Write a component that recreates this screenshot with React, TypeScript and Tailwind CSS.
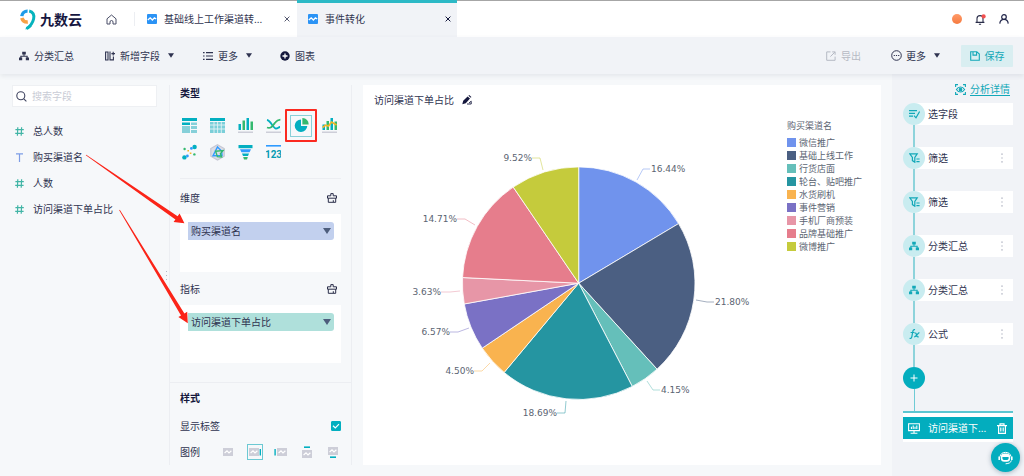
import React, { useState } from "react";

type IconProps = { className?: string };

const GRAY = "#cdced8";
const TEAL = "#03afc0";
const GREEN = "#34b96f";
const BLUE = "#2f9bff";

function LogoMark() {
  return (
    <svg viewBox="0 0 16 21" className="h-[21px] w-4" fill="none" aria-hidden="true">
      <path d="M7.6 2.1A5.6 5.6 0 0 0 1.8 7.2" stroke="#1e9be8" strokeWidth="3.4" />
      <path d="M1.8 9A5.8 5.8 0 0 0 7.8 13" stroke="#f7a145" strokeWidth="3.6" />
      <path d="M9.2 1.9C13 2.6 14.6 6 13.6 10C12.6 14.3 10 17.4 6.6 19.6" stroke="#06b3bd" strokeWidth="3" />
      <path d="M5 20.3L9.8 15.4L11.8 17.6L8.2 20.3Z" fill="#06b3bd" />
    </svg>
  );
}

function HomeIcon() {
  return (
    <svg viewBox="0 0 11 11" className="h-[11px] w-[11px]" fill="none" stroke="#4b4f68" strokeLinejoin="round" aria-hidden="true">
      <path d="M1 4.8L5.5 1L10 4.8V10H7V8A1.5 1.5 0 0 0 4 8V10H1Z" />
    </svg>
  );
}

function TabIcon() {
  return (
    <svg viewBox="0 0 10 10" className="h-[10px] w-[10px] shrink-0" fill="none" aria-hidden="true">
      <rect width="10" height="10" rx="1" fill="#2b93f5" />
      <path d="M.8 6L3.2 3.8L5.4 6L7.4 3.8L9.2 5" stroke="#fff" strokeWidth="1.3" />
    </svg>
  );
}

function CloseIcon() {
  return (
    <svg viewBox="0 0 6 6" className="h-[6px] w-[6px]" stroke="currentColor" aria-hidden="true">
      <path d="M.6 .6L5.4 5.4M5.4 .6L.6 5.4" />
    </svg>
  );
}

function TreeIcon({ className = "h-[10px] w-[10px]" }: IconProps) {
  return (
    <svg viewBox="0 0 10 10" className={className} fill="currentColor" aria-hidden="true">
      <path d="M3.2 .8H6.8V3.6H5.5V4.8H8.7V6.6H10V9.2H6.8V6.6H7.6V5.8H2.4V6.6H3.2V9.2H0V6.6H1.3V4.8H4.5V3.6H3.2Z" />
    </svg>
  );
}

function AddFieldIcon() {
  return (
    <svg viewBox="0 0 10 10" className="h-[10px] w-[10px]" fill="none" stroke="currentColor" strokeWidth="1.1" aria-hidden="true">
      <path d="M.6 1H3V9H.6ZM5 .5V9.5M5 8.9H8.4V5.5M6.4 2.6H10M8.2 .8V4.4" />
    </svg>
  );
}

function ListIcon() {
  return (
    <svg viewBox="0 0 10 10" className="h-[10px] w-[10px]" stroke="currentColor" strokeWidth="1.2" aria-hidden="true">
      <path d="M0 1.6H1.6M3 1.6H10M0 5H1.6M3 5H10M0 8.4H1.6M3 8.4H10" />
    </svg>
  );
}

function PlusDiscIcon() {
  return (
    <svg viewBox="0 0 10 10" className="h-[10px] w-[10px]" aria-hidden="true">
      <circle cx="5" cy="5" r="4.7" fill="#14173c" />
      <path d="M2.5 5H7.5M5 2.5V7.5" stroke="#fff" strokeWidth="1.3" />
    </svg>
  );
}

function Caret({ className = "h-[5px] w-[6px]" }: IconProps) {
  return (
    <svg viewBox="0 0 8 6" className={className} fill="currentColor" aria-hidden="true">
      <path d="M0 0H8L4 6Z" />
    </svg>
  );
}

function ExportIcon() {
  return (
    <svg viewBox="0 0 10 10" className="h-[10px] w-[10px]" fill="none" stroke="currentColor" aria-hidden="true">
      <path d="M4.5 .9H.7V9.3H9.1V5.6M6.2 .9H9.1V3.8M9.1 .9L4.4 5.6" />
    </svg>
  );
}

function MoreCircleIcon() {
  return (
    <svg viewBox="0 0 11 11" className="h-[11px] w-[11px]" fill="none" stroke="currentColor" aria-hidden="true">
      <circle cx="5.5" cy="5.5" r="4.8" />
      <path d="M2.7 5.5H3.9M4.9 5.5H6.1M7.1 5.5H8.3" strokeWidth="1.2" />
    </svg>
  );
}

function SaveIcon() {
  return (
    <svg viewBox="0 0 10 10" className="h-[10px] w-[10px]" fill="none" stroke="currentColor" strokeWidth="1.1" aria-hidden="true">
      <path d="M.7 .7H6.8L9.3 3.1V9.3H.7ZM3 .8V4.1H6.6V.8" />
    </svg>
  );
}

function BellIcon() {
  return (
    <svg viewBox="0 0 11 11" className="h-[11px] w-[11px]" fill="none" aria-hidden="true">
      <path d="M2 8.2V4.6A3 3 0 0 1 8 4.6V8.2M.6 8.4H9.4M3.9 10.2H6.1" stroke="#2a2d49" strokeWidth="1.1" />
      <circle cx="8.6" cy="2.4" r="2.1" fill="#f2504f" />
    </svg>
  );
}

function UserIcon() {
  return (
    <svg viewBox="0 0 10 10" className="h-[10px] w-[10px]" fill="none" stroke="#22264a" strokeWidth="1.2" aria-hidden="true">
      <circle cx="5" cy="3" r="2.3" />
      <path d="M.8 9.6C1 6.8 2.6 5.4 5 5.4S9 6.8 9.2 9.6" />
    </svg>
  );
}

function SearchIcon() {
  return (
    <svg viewBox="0 0 11 11" className="h-[11px] w-[11px] shrink-0" fill="none" stroke="#3f4460" strokeWidth="1.1" aria-hidden="true">
      <circle cx="4.8" cy="4.8" r="4" />
      <path d="M7.8 7.8L10.4 10.4" />
    </svg>
  );
}

function NumberIcon() {
  return (
    <svg viewBox="0 0 9 9" className="h-[9px] w-[9px]" stroke="#42b5a6" strokeWidth="1.2" aria-hidden="true">
      <path d="M2.8 .3L2.4 8.7M6.6 .3L6.2 8.7M.4 2.7H8.8M.2 6.3H8.6" />
    </svg>
  );
}

function TextIcon() {
  return (
    <svg viewBox="0 0 9 9" className="h-[9px] w-[9px]" stroke="#7d9de6" strokeWidth="1.2" aria-hidden="true">
      <path d="M1 .9H8M4.5 .9V9" />
    </svg>
  );
}

function ClearIcon() {
  return (
    <svg viewBox="0 0 10 10" className="h-[10px] w-[10px]" fill="none" stroke="#2a2d49" aria-hidden="true">
      <path d="M.5 5.2V2.8H3.8V.6H6.2V2.8H9.5V5.2ZM1.3 5.2V9.3H8.7V5.2M6.3 7.2V9" />
    </svg>
  );
}

function EditIcon() {
  return (
    <svg viewBox="0 0 10 10" className="h-[10px] w-[10px]" aria-hidden="true">
      <path d="M.3 9.2L1.2 5.8L5.6 1.4L8 3.6L3.8 8.2ZM6.4 .7L7.2 0L9.4 2L8.8 2.8Z" fill="#14173c" />
      <path d="M5 9H9.2V6.2L7 8" fill="none" stroke="#14173c" strokeWidth=".9" />
    </svg>
  );
}

const chartIcons: { name: string; art: React.ReactNode }[] = [
  {
    name: "分组表",
    art: (
      <>
        <path d="M0 1H15V4H0Z" fill={TEAL} />
        <path d="M0 5.5H8V8H0Z" fill={TEAL} />
        <path d="M0 9H8V16H0ZM9 5.5H15V8H9ZM9 9H15V12H9ZM9 13H15V16H9Z" fill="#86d0d9" />
      </>
    ),
  },
  {
    name: "明细表",
    art: (
      <>
        <path d="M0 1H15V4H0Z" fill={TEAL} />
        <path d="M0 5H15V16H0Z" fill="#7bcfd9" />
        <path d="M0 8H15M0 12H15M4 5V16M7.6 5V16M11.3 5V16" stroke="#e3f3f6" strokeWidth=".9" />
      </>
    ),
  },
  {
    name: "柱状图",
    art: (
      <>
        <path d="M.5 7H3V13H.5ZM8.5 1H11V13H8.5Z" fill={TEAL} />
        <path d="M4.5 3.5H7V13H4.5ZM12.5 4.5H15V13H12.5Z" fill={GREEN} />
        <path d="M0 14.5H15V16H0Z" fill={GRAY} />
      </>
    ),
  },
  {
    name: "折线图",
    art: (
      <>
        <path d="M1 3C5 3.6 7 11.5 10 11.5C12 11.5 12.5 10 14 10" fill="none" stroke={TEAL} strokeWidth="1.8" />
        <path d="M1 10.5C5 12 6.5 9 9.5 5.2C11 3 12 2.8 14.4 2.6" fill="none" stroke={GREEN} strokeWidth="1.8" />
        <path d="M0 14.5H15V16H0Z" fill={GRAY} />
      </>
    ),
  },
  {
    name: "饼图",
    art: (
      <>
        <path d="M7 2.4A6.3 6.3 0 1 0 13.3 9H7Z" fill={TEAL} />
        <path d="M8.4 1A6 6 0 0 1 14.6 7.6H8.4Z" fill={GREEN} />
      </>
    ),
  },
  {
    name: "组合图",
    art: (
      <>
        <path d="M.5 7.5H3V13H.5ZM8.5 1H11V13H8.5Z" fill={TEAL} />
        <path d="M4.5 4H7V13H4.5ZM12.5 4.5H15V13H12.5Z" fill={GREEN} />
        <path d="M.6 10.5L3.6 8.2L6.5 9L9.6 5L14.6 8" fill="none" stroke="#f3b626" strokeWidth="1.7" />
        <path d="M0 14.5H15V16H0Z" fill={GRAY} />
      </>
    ),
  },
  {
    name: "散点图",
    art: (
      <>
        <circle cx="12.6" cy="3" r="2.2" fill={TEAL} />
        <circle cx="9.4" cy="4.4" r="1.4" fill={BLUE} />
        <circle cx="2.4" cy="13.4" r="2.2" fill={TEAL} />
        <circle cx="5.4" cy="12" r="1.4" fill={BLUE} />
        <circle cx="2.6" cy="5" r="1.2" fill={GREEN} />
        <circle cx="12.4" cy="10.4" r="1.2" fill={GREEN} />
        <path d="M5.4 6H7V7.6H5.4ZM7.8 8.4H9.4V10H7.8Z" fill="#f3b626" />
      </>
    ),
  },
  {
    name: "雷达图",
    art: (
      <>
        <path d="M7.5 .8L14.2 4.6V12.2L7.5 16L.8 12.2V4.6Z" fill="#dcdde6" stroke="#c6c7d3" strokeWidth="1.2" />
        <path d="M7.5 3L11.6 7L12 11.6L3 11.8Z" fill="none" stroke={BLUE} strokeWidth="1.4" />
        <path d="M5.6 7.2L13 6.6L10.4 9.6L11.6 13L7.4 12.6Z" fill="none" stroke={GREEN} strokeWidth="1.4" />
      </>
    ),
  },
  {
    name: "漏斗图",
    art: (
      <>
        <path d="M.5 1H14.5V4.2H.5Z" fill={TEAL} />
        <path d="M2 5.3H13L11.6 8.3H3.4Z" fill={BLUE} />
        <path d="M4 9.4H11L10 12H5Z" fill={TEAL} />
        <path d="M5.2 13H9.8L9 15.6H6Z" fill={GREEN} />
      </>
    ),
  },
  {
    name: "指标卡",
    art: (
      <>
        <path d="M0 1H15V2.6H0Z" fill={BLUE} />
        <text x="7.5" y="14" textAnchor="middle" fontSize="10" fontWeight="700" fill="#079cb2" fontFamily="'Liberation Sans Narrow', Roboto, sans-serif">
          123
        </text>
      </>
    ),
  },
];

const legendSpots: { name: string; x: number; y: number; mark?: string }[] = [
  { name: "无图例", x: 2, y: 3 },
  { name: "右侧", x: 2, y: 3, mark: "M12.6 5H14V11.4H12.6Z" },
  { name: "左侧", x: 4, y: 3, mark: "M1.4 5H2.8V11.4H1.4Z" },
  { name: "顶部", x: 3, y: 5, mark: "M5 2.4H11V4H5Z" },
  { name: "底部", x: 3, y: 2, mark: "M5 12.4H11V14H5Z" },
];

const fields = [
  { name: "总人数", numeric: true },
  { name: "购买渠道名", numeric: false },
  { name: "人数", numeric: true },
  { name: "访问渠道下单占比", numeric: true },
];

const slices: { name: string; value: number; color: string; swatch: string; line: [number, number][] }[] = [
  { name: "微信推广", value: 16.44, color: "#7093ed", swatch: "bg-[#7093ed]", line: [[637, 180], [643, 169], [650, 169]] },
  { name: "基础上线工作", value: 21.8, color: "#4b5f82", swatch: "bg-[#4b5f82]", line: [[696, 300], [707, 302], [714, 302]] },
  { name: "行货店面", value: 4.15, color: "#65bfba", swatch: "bg-[#65bfba]", line: [[647, 381], [653, 390], [660, 390]] },
  { name: "轮台、贴吧推广", value: 18.69, color: "#2595a1", swatch: "bg-[#2595a1]", line: [[566, 401], [565, 413], [557, 413]] },
  { name: "水货刷机", value: 4.5, color: "#f9b34f", swatch: "bg-[#f9b34f]", line: [[490, 363], [482, 371], [474, 371]] },
  { name: "事件营销", value: 6.57, color: "#7a71c5", swatch: "bg-[#7a71c5]", line: [[469, 328], [458, 332], [450, 332]] },
  { name: "手机厂商预装", value: 3.63, color: "#e796a7", swatch: "bg-[#e796a7]", line: [[460, 291], [450, 292], [441, 292]] },
  { name: "品牌基础推广", value: 14.71, color: "#e67d8c", swatch: "bg-[#e67d8c]", line: [[475, 225], [465, 219], [457, 219]] },
  { name: "微博推广", value: 9.52, color: "#c5cb3c", swatch: "bg-[#c5cb3c]", line: [[543, 170], [540, 158], [532, 158]] },
];

function PieChart() {
  const cx = 578.7;
  const cy = 283.2;
  const r = 116.3;
  const total = slices.reduce((sum, s) => sum + s.value, 0);
  let turned = 0;
  return (
    <svg viewBox="363 109 424 352" className="min-w-0 flex-1 self-start" role="img" aria-label="访问渠道下单占比">
      {slices.map((s) => {
        const a0 = (turned / total) * Math.PI * 2;
        turned += s.value;
        const a1 = (turned / total) * Math.PI * 2;
        const d = `M${cx} ${cy}L${cx + r * Math.sin(a0)} ${cy - r * Math.cos(a0)}A${r} ${r} 0 0 1 ${cx + r * Math.sin(a1)} ${cy - r * Math.cos(a1)}Z`;
        const end = s.line[2];
        const left = end[0] < cx;
        return (
          <g key={s.name}>
            <path d={d} fill={s.color} stroke="#fff" strokeOpacity=".8" strokeWidth="1" strokeLinejoin="round" />
            <polyline points={s.line.map((p) => p.join(",")).join(" ")} fill="none" stroke={s.color} strokeOpacity=".5" />
            <text
              x={left ? end[0] : end[0] + 1}
              y={end[1] + 3}
              textAnchor={left ? "end" : "start"}
              fontSize="9"
              fill="#5b6472"
              fontFamily="'DejaVu Sans', sans-serif"
            >
              {s.value.toFixed(2)}%
            </text>
          </g>
        );
      })}
    </svg>
  );
}

function SelectIcon() {
  return (
    <svg viewBox="0 0 11 10" className="h-[10px] w-[11px]" fill="none" stroke="currentColor" strokeWidth="1.2" aria-hidden="true">
      <path d="M0 1.6H8M0 4.4H6M0 7.2H4M5 6.6L7 8.8L10.6 2.6" />
    </svg>
  );
}

function FilterIcon() {
  return (
    <svg viewBox="0 0 11 10" className="h-[10px] w-[11px]" fill="none" stroke="currentColor" strokeWidth="1.2" aria-hidden="true">
      <path d="M.8 .9H8.2L5.8 4.4V9.2L3.4 7.6V4.4ZM7.4 6H10.6M7.4 8.6H10.6" />
    </svg>
  );
}

function FxIcon() {
  return (
    <svg viewBox="0 0 11 10" className="h-[10px] w-[11px]" fill="none" stroke="currentColor" strokeWidth="1.2" aria-hidden="true">
      <path d="M6 .7C4.6 .3 4.1 1.2 3.8 2.6L2.8 7.8C2.5 9.2 1.8 9.6 .6 9.3M1.6 3.5H5.4M5.6 4.2C6.8 3.6 7.2 4.4 7.5 5.6C7.9 7.6 8.4 8.2 9.6 7.6M10.4 3.7C9 3.7 7 7.9 5.2 7.9" />
    </svg>
  );
}

const steps = [
  { name: "选字段", icon: <SelectIcon />, menu: false },
  { name: "筛选", icon: <FilterIcon />, menu: true },
  { name: "筛选", icon: <FilterIcon />, menu: true },
  { name: "分类汇总", icon: <TreeIcon />, menu: true },
  { name: "分类汇总", icon: <TreeIcon />, menu: true },
  { name: "公式", icon: <FxIcon />, menu: true },
];

function Header() {
  return (
    <header className="flex h-[37px] items-stretch border-t border-[#a6a6a6] bg-white">
      <a href="#home" className="ml-5 flex items-center gap-1">
        <LogoMark />
        <span className="text-[14px] leading-5 font-bold text-[#16163f]">九数云</span>
      </a>
      <a href="#start" aria-label="首页" className="ml-6 flex items-center">
        <HomeIcon />
      </a>
      <span className="my-auto ml-[17px] h-[14px] w-px bg-[#eceef2]" />
      <div role="tablist" className="-mt-px flex">
        <div className="flex w-[162px] items-center pt-px pr-[7px] pl-[12px]">
          <button role="tab" aria-selected="false" className="flex min-w-0 flex-1 items-center gap-[7px]">
            <TabIcon />
            <span className="whitespace-nowrap">基础线上工作渠道转...</span>
          </button>
          <button aria-label="关闭 基础线上工作渠道转" className="text-[#555970]">
            <CloseIcon />
          </button>
        </div>
        <div className="flex w-[160px] items-center border-t-[3px] border-[#2cb9c6] bg-[#f1f3f7] pr-[6px] pb-[2px] pl-[11px]">
          <button role="tab" aria-selected="true" className="flex min-w-0 flex-1 items-center gap-[7px]">
            <TabIcon />
            <span>事件转化</span>
          </button>
          <button aria-label="关闭 事件转化" className="text-[#14173c]">
            <CloseIcon />
          </button>
        </div>
      </div>
      <div className="mr-[15px] ml-auto flex items-center gap-[13px]">
        <span className="h-[10px] w-[10px] rounded-full bg-gradient-to-b from-[#ff9a68] to-[#f57a3e]" />
        <button aria-label="通知">
          <BellIcon />
        </button>
        <button aria-label="账号">
          <UserIcon />
        </button>
      </div>
    </header>
  );
}

function Toolbar() {
  return (
    <nav className="relative z-10 flex h-[37px] items-center bg-[#f1f3f7] pr-[11px] pl-[19px] shadow-[0_2px_5px_rgba(40,50,80,0.09)]">
      <button className="flex w-[86px] items-center gap-[5px]">
        <TreeIcon />
        分类汇总
      </button>
      <button className="flex w-[98px] items-center gap-[5px]">
        <AddFieldIcon />
        新增字段
        <Caret className="ml-[3px] h-[5px] w-[6px]" />
      </button>
      <button className="flex w-[77px] items-center gap-[5px]">
        <ListIcon />
        更多
        <Caret className="ml-[3px] h-[5px] w-[6px]" />
      </button>
      <button className="flex items-center gap-[5px]">
        <PlusDiscIcon />
        图表
      </button>
      <button disabled className="ml-auto flex items-center gap-[5px] text-[#b6bac4]">
        <ExportIcon />
        导出
      </button>
      <button className="ml-[30px] flex items-center gap-1">
        <MoreCircleIcon />
        更多
        <Caret className="ml-1 h-[5px] w-[6px]" />
      </button>
      <button className="ml-[21px] flex h-[22px] w-[52px] items-center justify-center gap-[5px] rounded-[1px] bg-[#d9eef1] text-[#12a8b8]">
        <SaveIcon />
        保存
      </button>
    </nav>
  );
}

function FieldPanel() {
  return (
    <aside className="w-[169px] shrink-0 pt-[11px] pr-3 pl-3">
      <label className="flex h-[22px] items-center gap-[5px] border border-[#eef0f3] bg-white px-[3px]">
        <SearchIcon />
        <input
          type="search"
          aria-label="搜索字段"
          placeholder="搜索字段"
          className="w-full min-w-0 bg-transparent outline-none placeholder:text-[#c9ccd6]"
        />
      </label>
      <ul className="mt-[11px] pl-[3px]">
        {fields.map((f) => (
          <li key={f.name} className="flex h-[26px] items-center gap-[9px]">
            {f.numeric ? <NumberIcon /> : <TextIcon />}
            {f.name}
          </li>
        ))}
      </ul>
    </aside>
  );
}

function DropZone({ title, field, measure }: { title: string; field: string; measure?: boolean }) {
  return (
    <section className="px-[10px]">
      <div className="flex h-[18px] items-center justify-between pr-1">
        <h3>{title}</h3>
        <button aria-label={`清空${title}`}>
          <ClearIcon />
        </button>
      </div>
      <div className="mt-[7px] h-[58px] bg-white py-2 pr-[7px] pl-2">
        <button
          className={
            measure
              ? "flex h-[18px] w-full items-center justify-between rounded-r-[3px] bg-[#afe0db] px-[3px]"
              : "flex h-[18px] w-full items-center justify-between rounded-r-[3px] bg-[#c2d0ee] px-[3px]"
          }
        >
          {field}
          <Caret className="h-[6px] w-2 text-[#4d5d7c]" />
        </button>
      </div>
    </section>
  );
}

function ConfigPanel() {
  const [showLabels, setShowLabels] = useState(true);
  return (
    <aside className="mt-[11px] mb-[11px] w-[183px] shrink-0 border-x border-[#eceef2]">
      <h2 className="px-[10px] leading-4 font-bold text-[#14173c]">类型</h2>
      <div className="mt-[11px] grid auto-rows-[27px] grid-cols-[repeat(6,28px)] pl-[5px]">
        {chartIcons.map((c) => {
          const active = c.name === "饼图";
          return (
            <div key={c.name} className="relative flex items-center justify-center">
              <button
                aria-label={c.name}
                aria-pressed={active}
                className={
                  active
                    ? "flex h-[22px] w-[22px] items-center justify-center border border-[#8ad0d8]"
                    : "flex h-[22px] w-[22px] items-center justify-center"
                }
              >
                <svg viewBox="0 0 15 17" className="h-[17px] w-[15px]" aria-hidden="true">
                  {c.art}
                </svg>
              </button>
              {active && <span className="pointer-events-none absolute -inset-x-[2px] -inset-y-[3px] rounded-[1px] border-2 border-[#fb2a20]" />}
            </div>
          );
        })}
      </div>
      <hr className="mx-[10px] mt-3 mb-[10px] border-[#eceef2]" />
      <DropZone title="维度" field="购买渠道名" />
      <div className="h-2" />
      <DropZone title="指标" field="访问渠道下单占比" measure />
      <hr className="mt-[19px] mb-[6px] border-[#eceef2]" />
      <section className="px-[10px]">
        <h2 className="leading-[18px] font-bold text-[#14173c]">样式</h2>
        <label className="mt-[10px] flex h-[18px] items-center justify-between">
          显示标签
          <span className="relative h-[10px] w-[10px]">
            <input
              type="checkbox"
              checked={showLabels}
              onChange={(e) => setShowLabels(e.target.checked)}
              className="block h-[10px] w-[10px] appearance-none rounded-[1px] border border-[#03afc0] bg-white checked:bg-[#03afc0]"
            />
            <svg viewBox="0 0 10 10" className="pointer-events-none absolute inset-0" fill="none" stroke="#fff" strokeWidth="1.2" aria-hidden="true">
              <path d="M2 4.8L4.3 7L8 3.2" />
            </svg>
          </span>
        </label>
        <div className="mt-2 flex h-[18px] items-center justify-between whitespace-nowrap">
          图例
          <div className="flex shrink-0 gap-[10px]">
            {legendSpots.map((s) => {
              const active = s.name === "右侧";
              return (
                <button
                  key={s.name}
                  aria-label={`图例${s.name}`}
                  aria-pressed={active}
                  className={active ? "h-4 w-4 shrink-0 outline-1 -outline-offset-1 outline-[#6cc9d3]" : "h-4 w-4 shrink-0"}
                >
                  <svg viewBox="0 0 16 16" className="h-4 w-4" fill="none" aria-hidden="true">
                    <rect x={s.x} y={s.y + 1} width="10" height="8" fill={GRAY} />
                    <path
                      d={`M${s.x + 1.6} ${s.y + 6}L${s.x + 4} ${s.y + 3.8}L${s.x + 6} ${s.y + 6}L${s.x + 8.4} ${s.y + 3.8}`}
                      stroke="#fff"
                      strokeWidth="1.2"
                    />
                    {s.mark && <path d={s.mark} fill={TEAL} />}
                  </svg>
                </button>
              );
            })}
          </div>
        </div>
      </section>
    </aside>
  );
}

function ChartCard() {
  return (
    <main className="mx-[11px] mt-[11px] mb-[11px] min-w-0 flex-1 bg-white pt-[6px]">
      <div className="flex h-[18px] items-center gap-2 pl-[11px]">
        <h1>访问渠道下单占比</h1>
        <button aria-label="编辑标题">
          <EditIcon />
        </button>
      </div>
      <div className="flex">
        <PieChart />
        <section className="w-[94px] shrink-0 pt-[10px] text-[9px] leading-[13px] text-[#5b6472]">
          <h2>购买渠道名</h2>
          <ul className="mt-1">
            {slices.map((s) => (
              <li key={s.name} className="flex items-center gap-[3px] whitespace-nowrap">
                <span className={`h-[9px] w-[9px] shrink-0 ${s.swatch}`} />
                {s.name}
              </li>
            ))}
          </ul>
        </section>
      </div>
    </main>
  );
}

function StepPanel() {
  return (
    <aside className="w-[132px] shrink-0 bg-[#f1f3f7] px-[11px] pt-[6px]">
      <a href="#detail" className="flex h-[18px] items-center justify-end gap-1 pr-[3px] text-[#12a8b8]">
        <svg viewBox="0 0 11 11" className="h-[11px] w-[11px]" fill="none" stroke="currentColor" strokeWidth="1.1" aria-hidden="true">
          <path d="M.6 3V.6H3M8 .6H10.4V3M10.4 8V10.4H8M3 10.4H.6V8M1.4 5.5C3.4 2.2 7.6 2.2 9.6 5.5C7.6 8.8 3.4 8.8 1.4 5.5Z" />
          <circle cx="5.5" cy="5.5" r="1.3" fill="currentColor" />
        </svg>
        <span className="underline underline-offset-2">分析详情</span>
      </a>
      <ol className="mt-[5px]">
        {steps.map((s, i) => (
          <li key={i} className="flex h-11">
            <div className="relative z-10 flex w-[22px] flex-col items-center">
              <span className="flex h-[22px] w-[22px] items-center justify-center rounded-full bg-[#c9ecf0] text-[#12a8b8]">{s.icon}</span>
              <span className="h-[22px] w-[2px] bg-[#8dd3db]" />
            </div>
            <div className="-ml-[11px] flex h-[22px] flex-1 items-center justify-between bg-white pr-2 pl-[14px]">
              {s.name}
              {s.menu && (
                <button aria-label={`${s.name}菜单`} className="text-[#9da2b3]">
                  <svg viewBox="0 0 6 10" className="h-[10px] w-[6px]" fill="currentColor" aria-hidden="true">
                    <path d="M2.4 .6H3.6V1.8H2.4ZM2.4 4.4H3.6V5.6H2.4ZM2.4 8.2H3.6V9.4H2.4Z" />
                  </svg>
                </button>
              )}
            </div>
          </li>
        ))}
      </ol>
      <div className="flex w-[22px] flex-col items-center">
        <button aria-label="添加步骤" className="flex h-[22px] w-[22px] items-center justify-center rounded-full bg-[#03adbe]">
          <svg viewBox="0 0 8 8" className="h-2 w-2" stroke="#fff" aria-hidden="true">
            <path d="M.5 4H7.5M4 .5V7.5" />
          </svg>
        </button>
        <span className="h-[22px] w-px bg-[#6fcbd5]" />
      </div>
      <div className="border-t-2 border-[#5cc6d1] bg-white pt-1 pb-[3px]">
        <div className="flex h-[22px] items-center gap-2 bg-[#03adbe] pr-[6px] pl-[5px] text-white">
          <svg viewBox="0 0 12 11" className="h-[11px] w-3" fill="none" stroke="#fff" strokeWidth="1.1" aria-hidden="true">
            <path d="M.6 .8H11.4V7.6H.6ZM2.6 10.2H9.4M6 7.6V10.2M3.4 3.8V6M5.2 2.6V6M7 3.8V6M8.8 2.6V6" />
          </svg>
          <span className="flex-1 whitespace-nowrap">访问渠道下...</span>
          <button aria-label="删除">
            <svg viewBox="0 0 10 11" className="h-[11px] w-[10px]" fill="none" stroke="#fff" strokeWidth="1.2" aria-hidden="true">
              <path d="M0 2.6H10M3 2.4V.8H7V2.4M1.6 2.8V10.3H8.4V2.8M3.8 4.6V8.6M6.2 4.6V8.6" />
            </svg>
          </button>
        </div>
      </div>
    </aside>
  );
}

/* Guide arrows from the field list to the drop zones. */
function GuideArrows() {
  return (
    <svg viewBox="0 74 200 270" className="pointer-events-none absolute top-0 left-0 h-[270px] w-[200px]" fill="#fb2418" aria-hidden="true">
      <path d="M86.2 154.7L177.6 216.2L179.6 213.4L184.4 223.2L173.6 222L175.4 219.4L85.8 155.3Z" />
      <path d="M119.8 209.8L184.4 313.4L187.2 311.8L187.8 323.2L178.4 317L181 315.4L119.2 210.2Z" />
    </svg>
  );
}

export default function App() {
  return (
    <div className="flex min-h-screen flex-col bg-[#f6f8fa] font-['Noto_Sans_CJK_SC','Noto_Sans',sans-serif] text-[10px] leading-4 text-[#2f3350]">
      <Header />
      <Toolbar />
      <div className="relative flex flex-1 items-stretch">
        <FieldPanel />
        <ConfigPanel />
        <ChartCard />
        <StepPanel />
        <GuideArrows />
        <svg viewBox="0 0 3 9" className="absolute top-[197px] left-[165px] h-[9px] w-[3px]" fill="#b5b9c6" aria-hidden="true">
          <path d="M1 0H2V1H1ZM1 4H2V5H1ZM1 8H2V9H1Z" />
        </svg>
      </div>
      <button
        aria-label="在线客服"
        className="fixed right-1 bottom-1 z-20 flex h-[29px] w-[29px] items-center justify-center rounded-full bg-[#03adbe] shadow-[0_1px_5px_rgba(20,60,90,0.35)]"
      >
        <svg viewBox="0 0 15 14" className="h-[14px] w-[15px]" fill="none" aria-hidden="true">
          <path d="M2 5.6A5.6 5.2 0 0 1 13 5.6" stroke="#fff" strokeWidth="1" />
          <rect x="2.8" y="2.4" width="9.4" height="8.4" rx="3.6" fill="#fff" />
          <path d="M4.4 6H10.6V7.4A2 2 0 0 1 8.6 9H6.4A2 2 0 0 1 4.4 7.4Z" fill="#03adbe" />
          <path d="M1.2 5.4V9M13.8 5.4V9" stroke="#fff" strokeWidth="1.6" />
          <path d="M13.4 9.4C12.8 11.6 11 12.6 7.6 12.8" stroke="#fff" strokeWidth="1" />
        </svg>
      </button>
    </div>
  );
}
